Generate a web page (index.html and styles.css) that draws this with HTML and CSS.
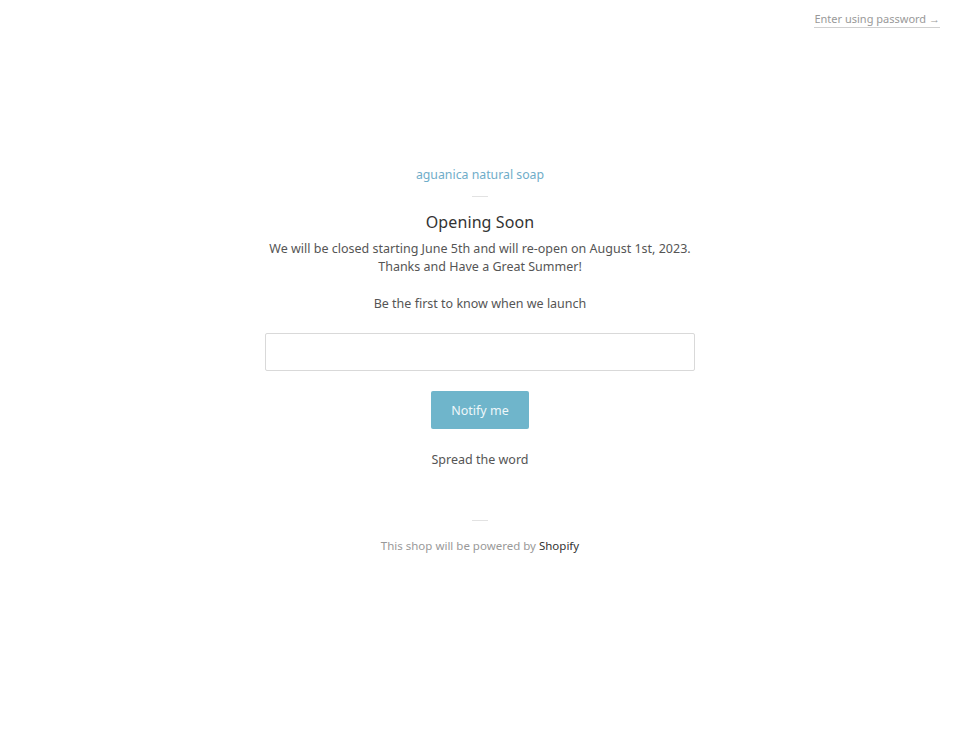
FILE: index.html
```html
<!DOCTYPE html>
<html lang="en">
<head>
  <meta charset="UTF-8" />
  <meta name="viewport" content="width=device-width, initial-scale=1" />
  <title>aguanica natural soap - Opening Soon</title>
  <link rel="stylesheet" href="styles.css">
</head>
<body>
  <header class="top-bar">
    <a class="password-link" href="#">Enter using password &rarr;</a>
  </header>

  <main class="page">
    <div class="brand">aguanica natural soap</div>
    <hr class="divider" />

    <h1 class="title">Opening Soon</h1>
    <p class="message">We will be closed starting June 5th and will re-open on August 1st, 2023.<br>Thanks and Have a Great Summer!</p>

    <!-- Signup form -->
    <form class="signup">
      <p class="signup-label">Be the first to know when we launch</p>
      <input class="signup-input" type="email" aria-label="Email" />
      <button class="signup-button" type="button">Notify me</button>
    </form>

    <p class="share">Spread the word</p>

    <hr class="divider footer-divider" />
    <p class="powered">This shop will be powered by <a href="#">Shopify</a></p>
  </main>
</body>
</html>
```

FILE: styles.css
```css
body {
  margin: 0;
  background-color: #fff;
  color: #555;
  font-family: "Noto Sans", "Open Sans", sans-serif;
  font-size: 12.5px;
}

.top-bar {
  display: flex;
  justify-content: flex-end;
  padding: 11px 20px 0 0;
  height: 30px;
}

.password-link {
  color: #999;
  font-size: 11px;
  text-decoration: none;
  border-bottom: 1px solid #d0d0d0;
  height: 16px;
  line-height: 16px;
}

.page {
  display: flex;
  flex-direction: column;
  align-items: center;
  padding-top: 125px;
  text-align: center;
}

.brand {
  color: #6fadc9;
  font-size: 12.3px;
  line-height: 18px;
}

.divider {
  width: 16px;
  border: 0;
  border-top: 1px solid #e2e2e2;
  margin: 12px 0 14px;
}

.title {
  margin: 0;
  font-size: 16px;
  font-weight: 400;
  color: #333;
  line-height: 22px;
  letter-spacing: 0.1px;
}

.message {
  margin: 7px 0 0;
  line-height: 18px;
}

.signup {
  display: flex;
  flex-direction: column;
  align-items: center;
}

.signup-label {
  margin: 19px 0 0;
  line-height: 18px;
}

.signup-input {
  box-sizing: border-box;
  width: 430px;
  height: 38px;
  margin-top: 20px;
  border: 1px solid #d9d9d9;
  border-radius: 2px;
}

.signup-button {
  width: 98px;
  height: 38px;
  margin-top: 20px;
  border: 0;
  border-radius: 2px;
  background-color: #6fb5cb;
  color: #eef7fa;
  font-family: inherit;
  font-size: 12.5px;
}

.share {
  margin: 22px 0 0;
  line-height: 18px;
}

.footer-divider {
  margin: 51px 0 16px;
}

.powered {
  margin: 0;
  font-size: 11.5px;
  color: #999;
  line-height: 18px;
}

.powered a {
  color: #333;
  text-decoration: none;
}
```
